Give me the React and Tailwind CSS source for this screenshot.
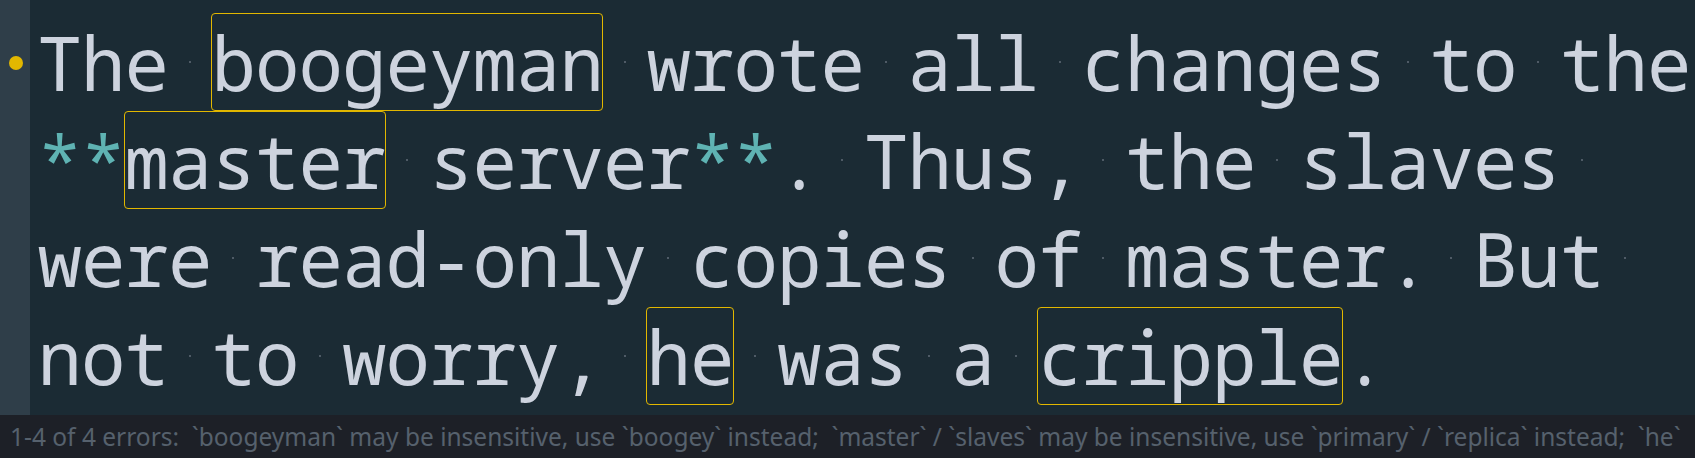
import React from "react";

const MONO = { fontFamily: '"Noto Sans Mono", "Droid Sans Mono", "DejaVu Sans Mono", monospace' };

function Spaced({ text, cyan }) {
  const parts = text.split(/( )/);
  return parts.map((p, i) => {
    if (p === " ") {
      return (
        <span key={i} className="relative">
          {" "}
          <span className="absolute left-1/2 top-[49px] h-[2px] w-[2px] -translate-x-1/2 bg-[#4f5b66]" />
        </span>
      );
    }
    if (!p) return null;
    return (
      <span key={i} className={cyan ? "text-[#5fb3b3]" : ""}>
        {p}
      </span>
    );
  });
}

function Boxed({ text }) {
  return (
    <span className="relative">
      {text}
      <span className="absolute left-[-1px] right-[0px] top-[1px] h-[98px] rounded-[4px] border border-[#e2b700]" />
    </span>
  );
}

const lines = [
  [{ t: "The " }, { t: "boogeyman", box: true }, { t: " wrote all changes to the " }],
  [
    { t: "**", cyan: true },
    { t: "master", box: true },
    { t: " server" },
    { t: "**", cyan: true },
    { t: ". Thus, the slaves " },
  ],
  [{ t: "were read-only copies of master. But " }],
  [
    { t: "not to worry, " },
    { t: "he", box: true },
    { t: " was a " },
    { t: "cripple", box: true },
    { t: "." },
  ],
];

export default function App() {
  return (
    <div className="flex h-[458px] w-[1695px] flex-col overflow-hidden bg-[#1b2b34]">
      <div className="flex h-[415px] shrink-0">
        <div className="flex w-[30px] shrink-0 flex-col bg-[#2f3e49] pt-[14px]">
          <div className="flex h-[98px] items-center">
            <span className="ml-[9px] h-[14px] w-[14px] rounded-full bg-[#e2b700]" />
          </div>
        </div>
        <div
          className="min-w-0 flex-1 overflow-hidden pl-[7.5px] pt-[14px] text-[74px] leading-[98px] tracking-[-0.9px] whitespace-pre text-[#cdd3de]"
          style={MONO}
        >
          {lines.map((line, li) => (
            <div key={li} className="h-[98px]">
              {line.map((seg, si) =>
                seg.box ? (
                  <Boxed key={si} text={seg.t} />
                ) : (
                  <Spaced key={si} text={seg.t} cyan={seg.cyan} />
                )
              )}
            </div>
          ))}
        </div>
      </div>
      <div
        className="flex h-[43px] shrink-0 items-center overflow-hidden whitespace-pre bg-[#1d2027] pl-[10px] pt-[2px] text-[24.5px] text-[#56616d]"
        style={{ fontFamily: '"Noto Sans", "DejaVu Sans", sans-serif' }}
      >
        {"1-4 of 4 errors:  `boogeyman` may be insensitive, use `boogey` instead;  `master` / `slaves` may be insensitive, use `primary` / `replica` instead;  `he`"}
      </div>
    </div>
  );
}
